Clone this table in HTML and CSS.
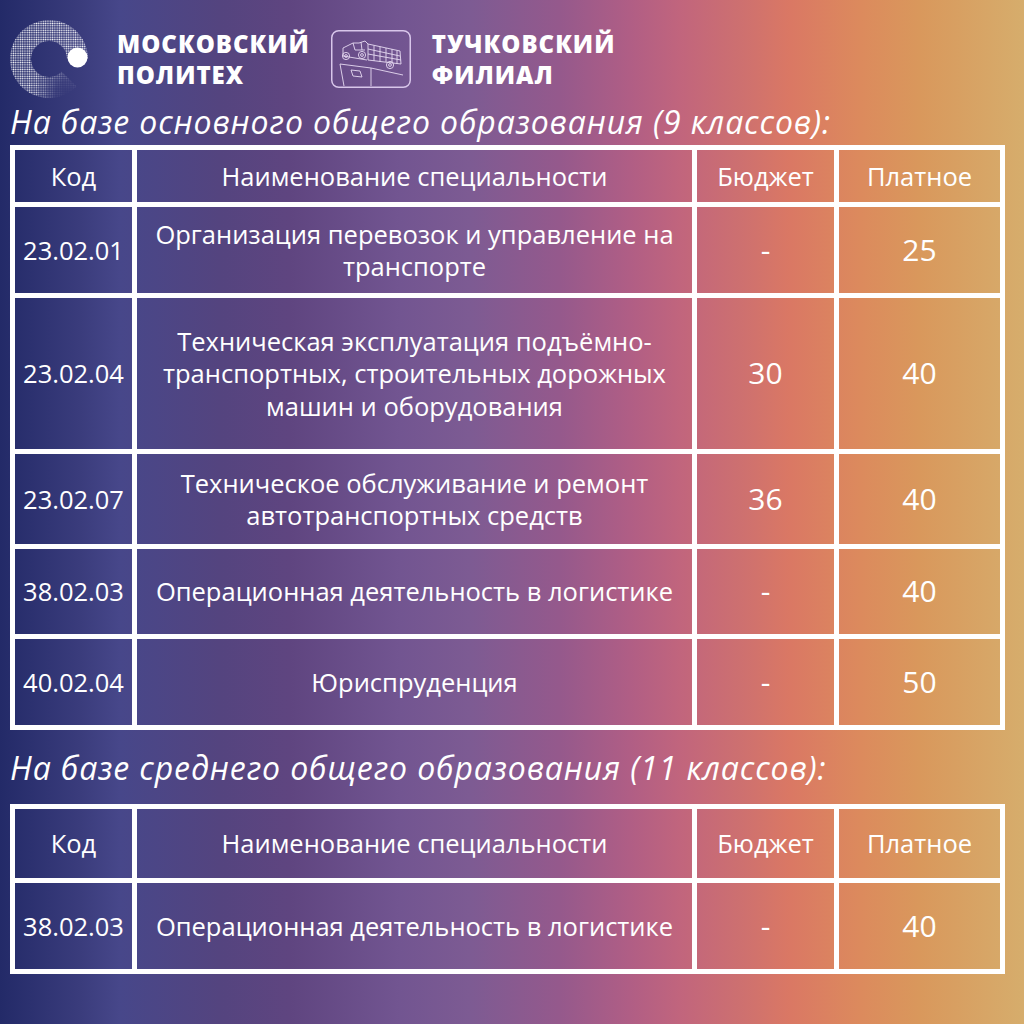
FILE: index.html
```html
<!DOCTYPE html>
<html lang="ru">
<head>
<meta charset="utf-8">
<title>Тучковский филиал — специальности</title>
<link rel="stylesheet" href="styles.css">
</head>
<body>
<div class="page">
  <header class="header">
    <svg class="ring" width="78" height="78" viewBox="0 0 78 78">
      <defs>
        <pattern id="dots" width="2.3" height="2.3" patternUnits="userSpaceOnUse">
          <circle cx="1.15" cy="1.15" r="0.8" fill="#ffffff"/>
        </pattern>
        <radialGradient id="fadeG" cx="58" cy="74" r="50" gradientUnits="userSpaceOnUse">
          <stop offset="0" stop-color="#fff" stop-opacity="0"/>
          <stop offset="0.25" stop-color="#fff" stop-opacity="0.15"/>
          <stop offset="0.5" stop-color="#fff" stop-opacity="0.6"/>
          <stop offset="0.75" stop-color="#fff" stop-opacity="1"/>
        </radialGradient>
        <mask id="fade">
          <rect width="78" height="78" fill="url(#fadeG)"/>
        </mask>
      </defs>
      <path d="M 78 39 A 39 39 0 1 0 66.6 66.6 L 51.7 51.7 A 18 18 0 1 1 57 39 Z" fill="url(#dots)" mask="url(#fade)"/>
      <circle cx="67.5" cy="37.5" r="10" fill="#ffffff"/>
    </svg>
    <div class="brand">МОСКОВСКИЙ<br>ПОЛИТЕХ</div>
    <svg class="truck" width="80" height="58" viewBox="0 0 80 58">
      <rect x="0.75" y="0.75" width="78.5" height="56.5" rx="7" fill="none" stroke="#d8c6ea" stroke-width="1.5"/>
      <g fill="none" stroke="#e6daf2" stroke-width="0.9" stroke-linejoin="round">
        <path d="M 12 18 L 22 13 L 28 13 L 34 11 L 37 14 L 37 30"/>
        <path d="M 12 18 L 12 26 L 36 30"/>
        <path d="M 22 13 L 24 20 L 34 20"/>
        <path d="M 30 12 L 31 20"/>
        <path d="M 37 14 L 69 21 L 70 34 L 37 30"/>
        <path d="M 37 19 L 69 26 M 37 24 L 70 30"/>
        <path d="M 43 15.5 L 43 31 M 49 16.5 L 49 32 M 55 18 L 55 32 M 61 19 L 61 33 M 66 20.5 L 66 34"/>
        <circle cx="15" cy="26" r="3.6"/>
        <circle cx="15" cy="26" r="1.4"/>
        <circle cx="31" cy="25" r="3.6"/>
        <circle cx="31" cy="25" r="1.4"/>
        <circle cx="59" cy="35" r="3.6"/>
        <circle cx="59" cy="35" r="1.4"/>
        <path d="M 9 34 L 40 38 L 72 45"/>
        <path d="M 9 34 L 13 56 M 40 38 L 40 56"/>
        <path d="M 20 40 L 29 41 L 31 47 L 22 46 Z"/>
      </g>
    </svg>
    <div class="brand">ТУЧКОВСКИЙ<br>ФИЛИАЛ</div>
  </header>

  <h2 class="section-title">На базе основного общего образования (9 классов):</h2>
  <div class="table table-main">
    <div class="cell head">Код</div>
    <div class="cell head">Наименование специальности</div>
    <div class="cell head">Бюджет</div>
    <div class="cell head">Платное</div>

    <div class="cell code">23.02.01</div>
    <div class="cell name">Организация перевозок и управление на<br>транспорте</div>
    <div class="cell num">-</div>
    <div class="cell num">25</div>

    <div class="cell code">23.02.04</div>
    <div class="cell name">Техническая эксплуатация подъёмно-<br>транспортных, строительных дорожных<br>машин и оборудования</div>
    <div class="cell num">30</div>
    <div class="cell num">40</div>

    <div class="cell code">23.02.07</div>
    <div class="cell name">Техническое обслуживание и ремонт<br>автотранспортных средств</div>
    <div class="cell num">36</div>
    <div class="cell num">40</div>

    <div class="cell code">38.02.03</div>
    <div class="cell name">Операционная деятельность в логистике</div>
    <div class="cell num">-</div>
    <div class="cell num">40</div>

    <div class="cell code">40.02.04</div>
    <div class="cell name">Юриспруденция</div>
    <div class="cell num">-</div>
    <div class="cell num">50</div>
  </div>

  <h2 class="section-title second">На базе среднего общего образования (11 классов):</h2>
  <div class="table table-second">
    <div class="cell head">Код</div>
    <div class="cell head">Наименование специальности</div>
    <div class="cell head">Бюджет</div>
    <div class="cell head">Платное</div>

    <div class="cell code">38.02.03</div>
    <div class="cell name">Операционная деятельность в логистике</div>
    <div class="cell num">-</div>
    <div class="cell num">40</div>
  </div>
</div>
</body>
</html>
```

FILE: styles.css
```css
html, body {
  margin: 0;
  padding: 0;
}

body {
  width: 1024px;
  height: 1024px;
  overflow: hidden;
  color: #ffffff;
  font-family: "Open Sans", "Noto Sans", sans-serif;
  background: linear-gradient(to right,
    #232a68 0px,
    #3a3c7c 80px,
    #47478a 120px,
    #54447f 220px,
    #5f4580 290px,
    #725591 400px,
    #7d5b93 470px,
    #95598c 560px,
    #b05e85 630px,
    #c1657d 680px,
    #cd7070 740px,
    #da7864 790px,
    #dc8a5d 860px,
    #d9985c 920px,
    #d6ad6c 1024px);
}

.page {
  padding: 0 19px 0 10px;
}

.header {
  height: 82px;
  padding-top: 18px;
  padding-bottom: 4px;
  display: flex;
  align-items: center;
}

.ring {
  flex: none;
  margin-right: 29px;
}

.brand {
  font-weight: 800;
  font-size: 24px;
  line-height: 31px;
  letter-spacing: 1px;
  color: #ffffff;
  white-space: nowrap;
}

.truck {
  flex: none;
  margin: 0 21px 0 21px;
}

.section-title {
  margin: -3px 0 3px 0;
  height: 41px;
  font-size: 32px;
  line-height: 41px;
  letter-spacing: 0.9px;
  font-style: italic;
  font-weight: 400;
  white-space: nowrap;
}

.section-title.second {
  margin-top: 17px;
  margin-bottom: 16px;
}

.table {
  display: grid;
  grid-template-columns: 122px 560px 142px 166px;
  border-top: 5px solid #ffffff;
  border-left: 5px solid #ffffff;
  width: 990px;
}

.table-main {
  grid-template-rows: 57px 91px 156px 95px 90px 91px;
}

.table-second {
  grid-template-rows: 74px 91px;
}

.cell {
  border-right: 5px solid #ffffff;
  border-bottom: 5px solid #ffffff;
  display: flex;
  align-items: center;
  justify-content: center;
  text-align: center;
  font-size: 25.5px;
  line-height: 32.5px;
  white-space: nowrap;
}

.cell.num {
  font-size: 30px;
}
```
